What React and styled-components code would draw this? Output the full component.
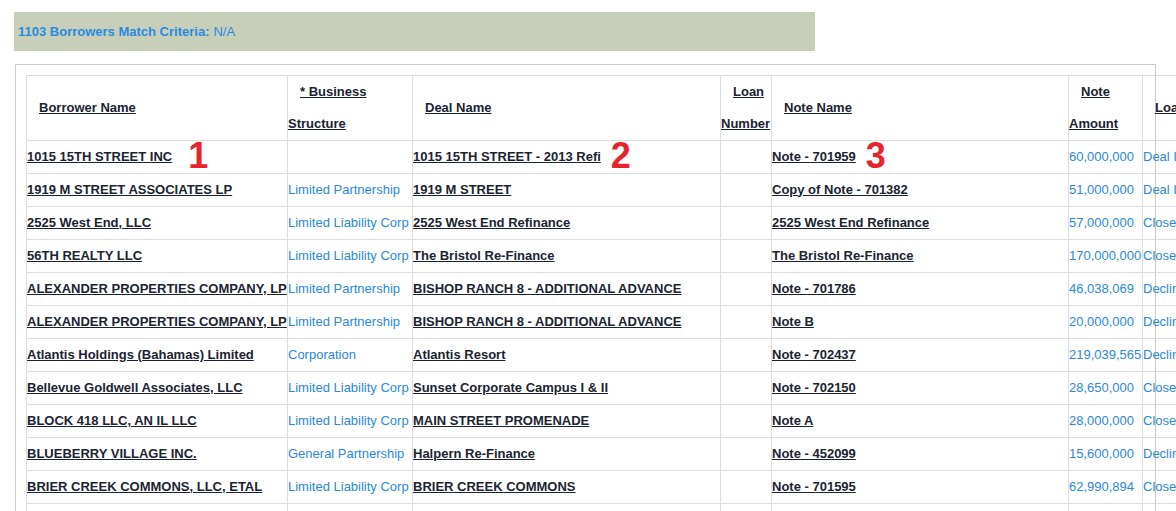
import React from "react";
import styled, { createGlobalStyle } from "styled-components";

const GlobalStyle = createGlobalStyle`
  html, body {
    margin: 0;
    padding: 0;
    overflow: hidden;
    background: #fff;
    font-family: "Liberation Sans", Arial, Helvetica, sans-serif;
  }
`;

const Page = styled.div`
  padding: 12px 0 0 14px;
`;

const Banner = styled.div`
  width: 801px;
  height: 39px;
  box-sizing: border-box;
  background-color: #c7cfb8;
  display: flex;
  align-items: center;
  padding-left: 4px;
  font-size: 13px;
  color: #2a8ae2;
`;

const BannerLabel = styled.span`
  font-weight: bold;
  margin-right: 4px;
`;

const Box = styled.div`
  margin: 13px 0 0 1px;
  width: 1141px;
  box-sizing: border-box;
  border: 1px solid #cbcbcb;
  border-bottom: 0;
  padding: 10px 10px 0 10px;
`;

const Table = styled.table`
  border-collapse: collapse;
  table-layout: fixed;
  width: 1266px;
  font-size: 13px;
`;

const HeadCell = styled.th`
  border: 1px solid #dddddd;
  padding: 0;
  text-align: left;
  text-indent: 12px;
  line-height: 32px;
  vertical-align: middle;
  font-weight: bold;
`;

const Cell = styled.td`
  border: 1px solid #dddddd;
  padding: 0 0 2px 0;
  height: 30px;
  white-space: nowrap;
  overflow: visible;
  vertical-align: middle;
  color: ${(props) => (props.blue ? "#2b88dc" : "#1b2431")};
`;

const Link = styled.a`
  color: #1b2431;
  font-weight: bold;
  text-decoration: underline;
  cursor: pointer;
`;

const Anchor = styled.span`
  position: relative;
`;

const Marker = styled.span`
  position: absolute;
  left: 100%;
  top: 50%;
  transform: translateY(-50%);
  margin-left: ${(props) => props.gap}px;
  font-size: 36px;
  line-height: 1;
  font-weight: bold;
  color: #e8232b;
`;

const columns = [
  { width: 261, label: "Borrower Name" },
  { width: 125, label: "* Business Structure" },
  { width: 308, label: "Deal Name" },
  { width: 51, label: "Loan Number" },
  { width: 297, label: "Note Name" },
  { width: 74, label: "Note Amount" },
  { width: 150, label: "Loan Status" },
];

const rows = [
  ["1015 15TH STREET INC", "", "1015 15TH STREET - 2013 Refi", "Note - 701959", "60,000,000", "Deal In Process"],
  ["1919 M STREET ASSOCIATES LP", "Limited Partnership", "1919 M STREET", "Copy of Note - 701382", "51,000,000", "Deal In Process"],
  ["2525 West End, LLC", "Limited Liability Corp", "2525 West End Refinance", "2525 West End Refinance", "57,000,000", "Closed"],
  ["56TH REALTY LLC", "Limited Liability Corp", "The Bristol Re-Finance", "The Bristol Re-Finance", "170,000,000", "Closed"],
  ["ALEXANDER PROPERTIES COMPANY, LP", "Limited Partnership", "BISHOP RANCH 8 - ADDITIONAL ADVANCE", "Note - 701786", "46,038,069", "Declined"],
  ["ALEXANDER PROPERTIES COMPANY, LP", "Limited Partnership", "BISHOP RANCH 8 - ADDITIONAL ADVANCE", "Note B", "20,000,000", "Declined"],
  ["Atlantis Holdings (Bahamas) Limited", "Corporation", "Atlantis Resort", "Note - 702437", "219,039,565", "Declined"],
  ["Bellevue Goldwell Associates, LLC", "Limited Liability Corp", "Sunset Corporate Campus I & II", "Note - 702150", "28,650,000", "Closed"],
  ["BLOCK 418 LLC, AN IL LLC", "Limited Liability Corp", "MAIN STREET PROMENADE", "Note A", "28,000,000", "Closed"],
  ["BLUEBERRY VILLAGE INC.", "General Partnership", "Halpern Re-Finance", "Note - 452099", "15,600,000", "Declined"],
  ["BRIER CREEK COMMONS, LLC, ETAL", "Limited Liability Corp", "BRIER CREEK COMMONS", "Note - 701595", "62,990,894", "Closed"],
  ["BRIGHTON PARK LLC", "Limited Liability Corp", "Brighton Park Refinance", "Note - 701610", "34,500,000", "Closed"],
];

// red call-outs drawn next to the first row's links
const markers = { 0: { n: "1", gap: 16 }, 2: { n: "2", gap: 10 }, 4: { n: "3", gap: 10 } };

const LinkText = ({ text, mark }) => (
  <Anchor>
    <Link>{text}</Link>
    {mark && <Marker gap={mark.gap}>{mark.n}</Marker>}
  </Anchor>
);

const App = () => {
  return (
    <Page>
      <GlobalStyle />
      <Banner>
        <BannerLabel>1103 Borrowers Match Criteria:</BannerLabel>N/A
      </Banner>
      <Box>
        <Table>
          <colgroup>
            {columns.map((c) => (
              <col key={c.label} style={{ width: c.width }} />
            ))}
          </colgroup>
          <thead>
            <tr>
              {columns.map((c) => (
                <HeadCell key={c.label}>
                  <Link>{c.label}</Link>
                </HeadCell>
              ))}
            </tr>
          </thead>
          <tbody>
            {rows.map((r, i) => {
              const [borrower, structure, deal, note, amount, status] = r;
              const first = i === 0;
              return (
                <tr key={i}>
                  <Cell>
                    <LinkText text={borrower} mark={first && markers[0]} />
                  </Cell>
                  <Cell blue>{structure}</Cell>
                  <Cell>
                    <LinkText text={deal} mark={first && markers[2]} />
                  </Cell>
                  <Cell />
                  <Cell>
                    <LinkText text={note} mark={first && markers[4]} />
                  </Cell>
                  <Cell blue>{amount}</Cell>
                  <Cell blue>{status}</Cell>
                </tr>
              );
            })}
          </tbody>
        </Table>
      </Box>
    </Page>
  );
};

export default App;
